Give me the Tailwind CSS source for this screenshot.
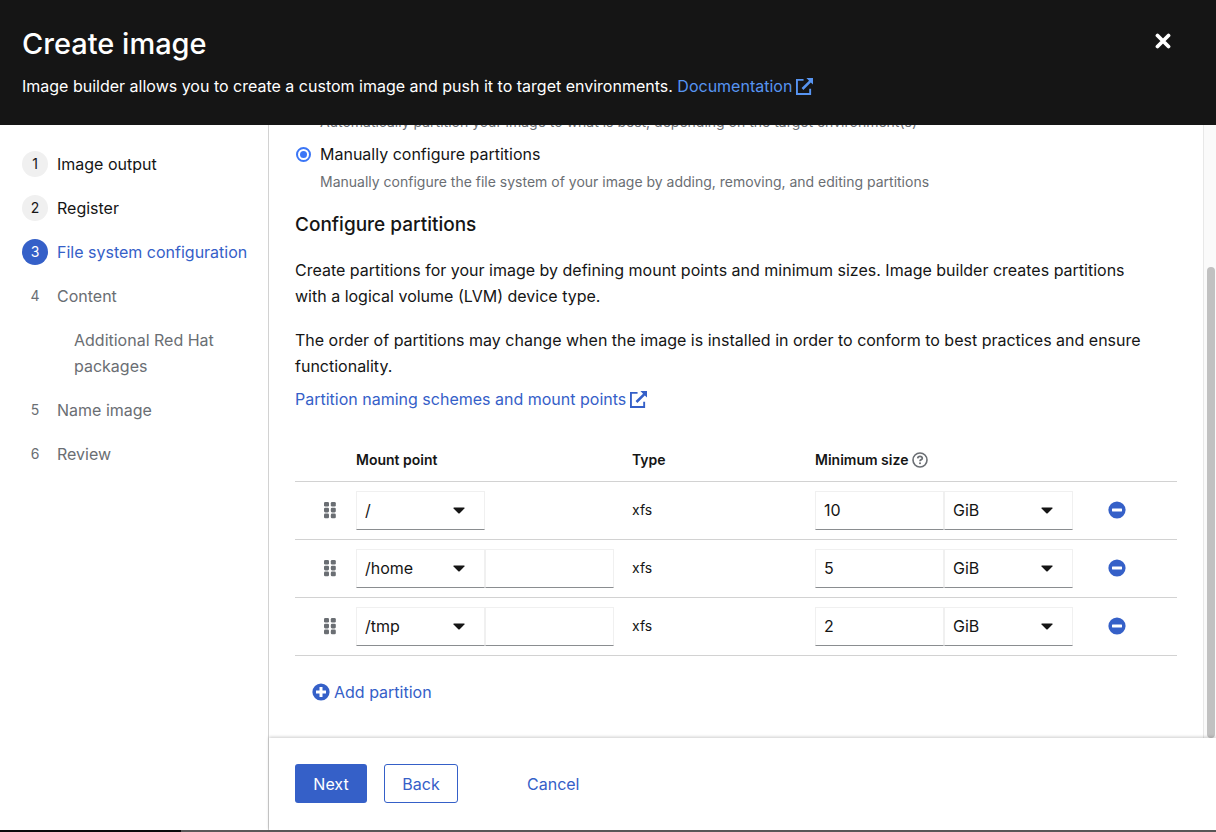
<!DOCTYPE html>
<html lang="en">
<head>
<meta charset="utf-8">
<meta name="viewport" content="width=device-width, initial-scale=1">
<title>Create image</title>
<script src="https://cdn.jsdelivr.net/npm/@tailwindcss/browser@4"></script>
</head>
<body class="flex h-screen flex-col overflow-hidden bg-white font-['Inter','Open_Sans',sans-serif] text-[16px] leading-[26px] text-[#151515]">
<svg class="hidden" aria-hidden="true">
  <symbol id="external" viewBox="0 0 18 18"><path d="M8 2H1v15h14v-5.500" fill="none" stroke="currentColor" stroke-width="2"/><path d="M11 0h7v7l-2.300-2.300-7.900 7.900-1.900-1.900 7.900-7.900z" fill="currentColor"/></symbol>
  <symbol id="grip" viewBox="0 0 12 17"><g fill="currentColor"><rect width="5" height="4.600" rx="1.300"/><rect x="6.800" width="5" height="4.600" rx="1.300"/><rect y="5.800" width="5" height="4.600" rx="1.300"/><rect x="6.800" y="5.800" width="5" height="4.600" rx="1.300"/><rect y="11.600" width="5" height="4.600" rx="1.300"/><rect x="6.800" y="11.600" width="5" height="4.600" rx="1.300"/></g></symbol>
  <symbol id="caret" viewBox="0 0 12 7"><path d="M1 0.500h10q1 .2.400 1L6.700 6.200q-.7.600-1.400 0L.6 1.500Q0 .7 1 .5z" fill="currentColor"/></symbol>
  <symbol id="minus" viewBox="0 0 18 18"><circle cx="9" cy="9" r="8.600" fill="currentColor"/><rect x="4" y="7.500" width="10" height="3" rx=".4" fill="#fff"/></symbol>
  <symbol id="plus" viewBox="0 0 18 18"><circle cx="9" cy="9" r="8.600" fill="currentColor"/><path d="M7.500 4h3v3.500H14v3h-3.500V14h-3v-3.500H4v-3h3.500z" fill="#fff"/></symbol>
</svg>

<header class="flex shrink-0 items-start justify-between bg-[#151515] px-[22px] pt-[26px] pb-[26px] text-white">
  <div>
    <h1 class="text-[29px] leading-9 font-medium">Create image</h1>
    <p class="mt-[11px]">Image builder allows you to create a custom image and push it to target environments. <a href="#" class="inline-flex items-center gap-1 text-[#5794f1]">Documentation <svg class="size-[17px]"><use href="#external"/></svg></a></p>
  </div>
  <button type="button" aria-label="Close" class="mt-[7px] mr-[23px] p-0"><svg class="block size-4" viewBox="0 0 16 16"><path d="M2.500 2.500l11 11M13.500 2.500L2.500 13.500" stroke="currentColor" stroke-width="3.800" stroke-linecap="round"/></svg></button>
</header>

<div class="flex min-h-0 flex-1">
  <nav aria-label="Wizard steps" class="w-[269px] shrink-0 border-r border-[#d2d2d2] pt-[26px] pr-3 pl-[22px]">
    <ol class="flex flex-col gap-[18px] text-[#6a6e73]">
      <li><a href="#" class="flex gap-[9px] text-[#151515]"><span class="size-[26px] rounded-full bg-[#f0f0f0] text-center text-[14px]">1</span>Image output</a></li>
      <li><a href="#" class="flex gap-[9px] text-[#151515]"><span class="size-[26px] rounded-full bg-[#f0f0f0] text-center text-[14px]">2</span>Register</a></li>
      <li><a href="#" aria-current="step" class="flex gap-[9px] whitespace-nowrap text-[#3560c8]"><span class="size-[26px] rounded-full bg-[#3560c8] text-center text-[14px] text-white">3</span>File system configuration</a></li>
      <li><a href="#" class="flex gap-[9px]"><span class="size-[26px] text-center text-[14px]">4</span>Content</a></li>
      <li class="pl-[52px]"><a href="#" class="block">Additional Red Hat packages</a></li>
      <li><a href="#" class="flex gap-[9px]"><span class="size-[26px] text-center text-[14px]">5</span>Name image</a></li>
      <li><a href="#" class="flex gap-[9px]"><span class="size-[26px] text-center text-[14px]">6</span>Review</a></li>
    </ol>
  </nav>

  <div class="flex min-w-0 flex-1 flex-col">
    <div class="flex min-h-0 flex-1 overflow-hidden">
      <main class="min-w-0 flex-1 px-[26px]">
        <p class="-mt-[15px] pl-[25px] text-[14px] leading-6 text-[#6a6e73]">Automatically partition your image to what is best, depending on the target environment(s)</p>
        <label class="mt-[7px] flex items-center gap-[9px]"><input type="radio" name="mode" checked class="ml-[1px] grid size-[15px] appearance-none place-content-center rounded-full border-2 border-[#3b76f6] before:size-[7px] before:rounded-full before:bg-[#3b76f6]">Manually configure partitions</label>
        <p class="mt-[3px] pl-[25px] text-[14px] leading-6 text-[#6a6e73]">Manually configure the file system of your image by adding, removing, and editing partitions</p>
        <h2 class="mt-[18px] text-[19px] leading-[26px] font-medium">Configure partitions</h2>
        <p class="mt-[19px] max-w-[864px]">Create partitions for your image by defining mount points and minimum sizes. Image builder creates partitions with a logical volume (LVM) device type.</p>
        <p class="mt-[18px] max-w-[864px]">The order of partitions may change when the image is installed in order to conform to best practices and ensure functionality.</p>
        <a href="#" class="mt-[7px] flex w-fit items-center gap-1 text-[#3560c8]">Partition naming schemes and mount points <svg class="size-[17px]"><use href="#external"/></svg></a>

        <table class="mt-7 w-full table-fixed text-left">
          <colgroup><col class="w-[61px]"><col class="w-[276px]"><col class="w-[183px]"><col class="w-[293px]"><col></colgroup>
          <thead class="text-[14px]">
            <tr class="h-[41px] border-b border-[#d2d2d2]">
              <td></td>
              <th class="font-semibold">Mount point</th>
              <th class="font-semibold">Type</th>
              <th class="font-semibold"><span class="flex items-center gap-1">Minimum size <button type="button" aria-label="Minimum size help" class="text-[#6a6e73]"><svg class="block size-4" viewBox="0 0 16 16" fill="none" stroke="currentColor"><circle cx="8" cy="8" r="7" stroke-width="1.600"/><path d="M5.700 6.300Q5.900 4.300 8 4.300T10.300 6.200Q10.300 7.300 8.900 7.900 8 8.300 8 9.300" stroke-width="1.700"/><circle cx="8" cy="11.300" r="1" fill="currentColor" stroke="none"/></svg></button></span></th>
              <td></td>
            </tr>
          </thead>
          <tbody>
            <tr class="h-[58px] border-b border-[#d2d2d2]">
              <td><button type="button" aria-label="Drag row 1" class="ml-[29px] block text-[#6a6e73]"><svg class="h-[17px] w-3"><use href="#grip"/></svg></button></td>
              <td><div class="flex"><div class="relative w-[129px]"><select aria-label="Mount point 1" class="h-[39px] w-full appearance-none border border-[#f0f0f0] border-b-[#8a8d90] bg-white px-2"><option>/</option></select><svg class="pointer-events-none absolute top-4 right-5 h-[7px] w-3"><use href="#caret"/></svg></div></div></td>
              <td class="text-[14px]">xfs</td>
              <td><div class="flex"><input aria-label="Minimum size 1" value="10" class="h-[39px] w-[129px] border border-[#f0f0f0] border-b-[#8a8d90] px-2"><div class="relative w-[129px]"><select aria-label="Unit 1" class="h-[39px] w-full appearance-none border border-[#f0f0f0] border-b-[#8a8d90] bg-white px-2"><option>GiB</option></select><svg class="pointer-events-none absolute top-4 right-5 h-[7px] w-3"><use href="#caret"/></svg></div></div></td>
              <td><button type="button" aria-label="Remove partition 1" class="block text-[#3560c8]"><svg class="size-[18px]"><use href="#minus"/></svg></button></td>
            </tr>
            <tr class="h-[58px] border-b border-[#d2d2d2]">
              <td><button type="button" aria-label="Drag row 2" class="ml-[29px] block text-[#6a6e73]"><svg class="h-[17px] w-3"><use href="#grip"/></svg></button></td>
              <td><div class="flex"><div class="relative w-[129px]"><select aria-label="Mount point 2" class="h-[39px] w-full appearance-none border border-[#f0f0f0] border-b-[#8a8d90] bg-white px-2"><option>/home</option></select><svg class="pointer-events-none absolute top-4 right-5 h-[7px] w-3"><use href="#caret"/></svg></div><input aria-label="Mount point suffix 2" class="h-[39px] w-[129px] border border-[#f0f0f0] border-b-[#8a8d90] px-2"></div></td>
              <td class="text-[14px]">xfs</td>
              <td><div class="flex"><input aria-label="Minimum size 2" value="5" class="h-[39px] w-[129px] border border-[#f0f0f0] border-b-[#8a8d90] px-2"><div class="relative w-[129px]"><select aria-label="Unit 2" class="h-[39px] w-full appearance-none border border-[#f0f0f0] border-b-[#8a8d90] bg-white px-2"><option>GiB</option></select><svg class="pointer-events-none absolute top-4 right-5 h-[7px] w-3"><use href="#caret"/></svg></div></div></td>
              <td><button type="button" aria-label="Remove partition 2" class="block text-[#3560c8]"><svg class="size-[18px]"><use href="#minus"/></svg></button></td>
            </tr>
            <tr class="h-[58px] border-b border-[#d2d2d2]">
              <td><button type="button" aria-label="Drag row 3" class="ml-[29px] block text-[#6a6e73]"><svg class="h-[17px] w-3"><use href="#grip"/></svg></button></td>
              <td><div class="flex"><div class="relative w-[129px]"><select aria-label="Mount point 3" class="h-[39px] w-full appearance-none border border-[#f0f0f0] border-b-[#8a8d90] bg-white px-2"><option>/tmp</option></select><svg class="pointer-events-none absolute top-4 right-5 h-[7px] w-3"><use href="#caret"/></svg></div><input aria-label="Mount point suffix 3" class="h-[39px] w-[129px] border border-[#f0f0f0] border-b-[#8a8d90] px-2"></div></td>
              <td class="text-[14px]">xfs</td>
              <td><div class="flex"><input aria-label="Minimum size 3" value="2" class="h-[39px] w-[129px] border border-[#f0f0f0] border-b-[#8a8d90] px-2"><div class="relative w-[129px]"><select aria-label="Unit 3" class="h-[39px] w-full appearance-none border border-[#f0f0f0] border-b-[#8a8d90] bg-white px-2"><option>GiB</option></select><svg class="pointer-events-none absolute top-4 right-5 h-[7px] w-3"><use href="#caret"/></svg></div></div></td>
              <td><button type="button" aria-label="Remove partition 3" class="block text-[#3560c8]"><svg class="size-[18px]"><use href="#minus"/></svg></button></td>
            </tr>
          </tbody>
        </table>
        <button type="button" class="mt-[23px] ml-[17px] flex items-center gap-1 text-[#3560c8]"><svg class="size-[18px]"><use href="#plus"/></svg>Add partition</button>
      </main>
      <div class="flex w-[13px] shrink-0 flex-col border-l border-[#e8e8e8] bg-[#fafafa] pt-[142px] pr-[1px] pl-[3px]">
        <div class="flex-1 rounded-full bg-[#c1c1c1]"></div>
      </div>
    </div>
    <footer class="z-10 flex shrink-0 items-center bg-white px-[26px] pt-[26px] pb-[27px] shadow-[0_-1px_3px_rgba(0,0,0,0.2)]">
      <button type="button" class="h-[39px] w-[72px] rounded-[3px] bg-[#3560c8] text-white">Next</button>
      <button type="button" class="ml-[17px] h-[39px] w-[74px] rounded-[3px] border border-[#3560c8] text-[#3560c8]">Back</button>
      <button type="button" class="ml-[52px] h-[39px] px-[17px] text-[#3560c8]">Cancel</button>
    </footer>
  </div>
</div>
<div class="h-[2px] shrink-0 bg-[#5a5858]"><div class="h-full w-[181px] bg-[#0c0a0a]"></div></div>
</body>
</html>
